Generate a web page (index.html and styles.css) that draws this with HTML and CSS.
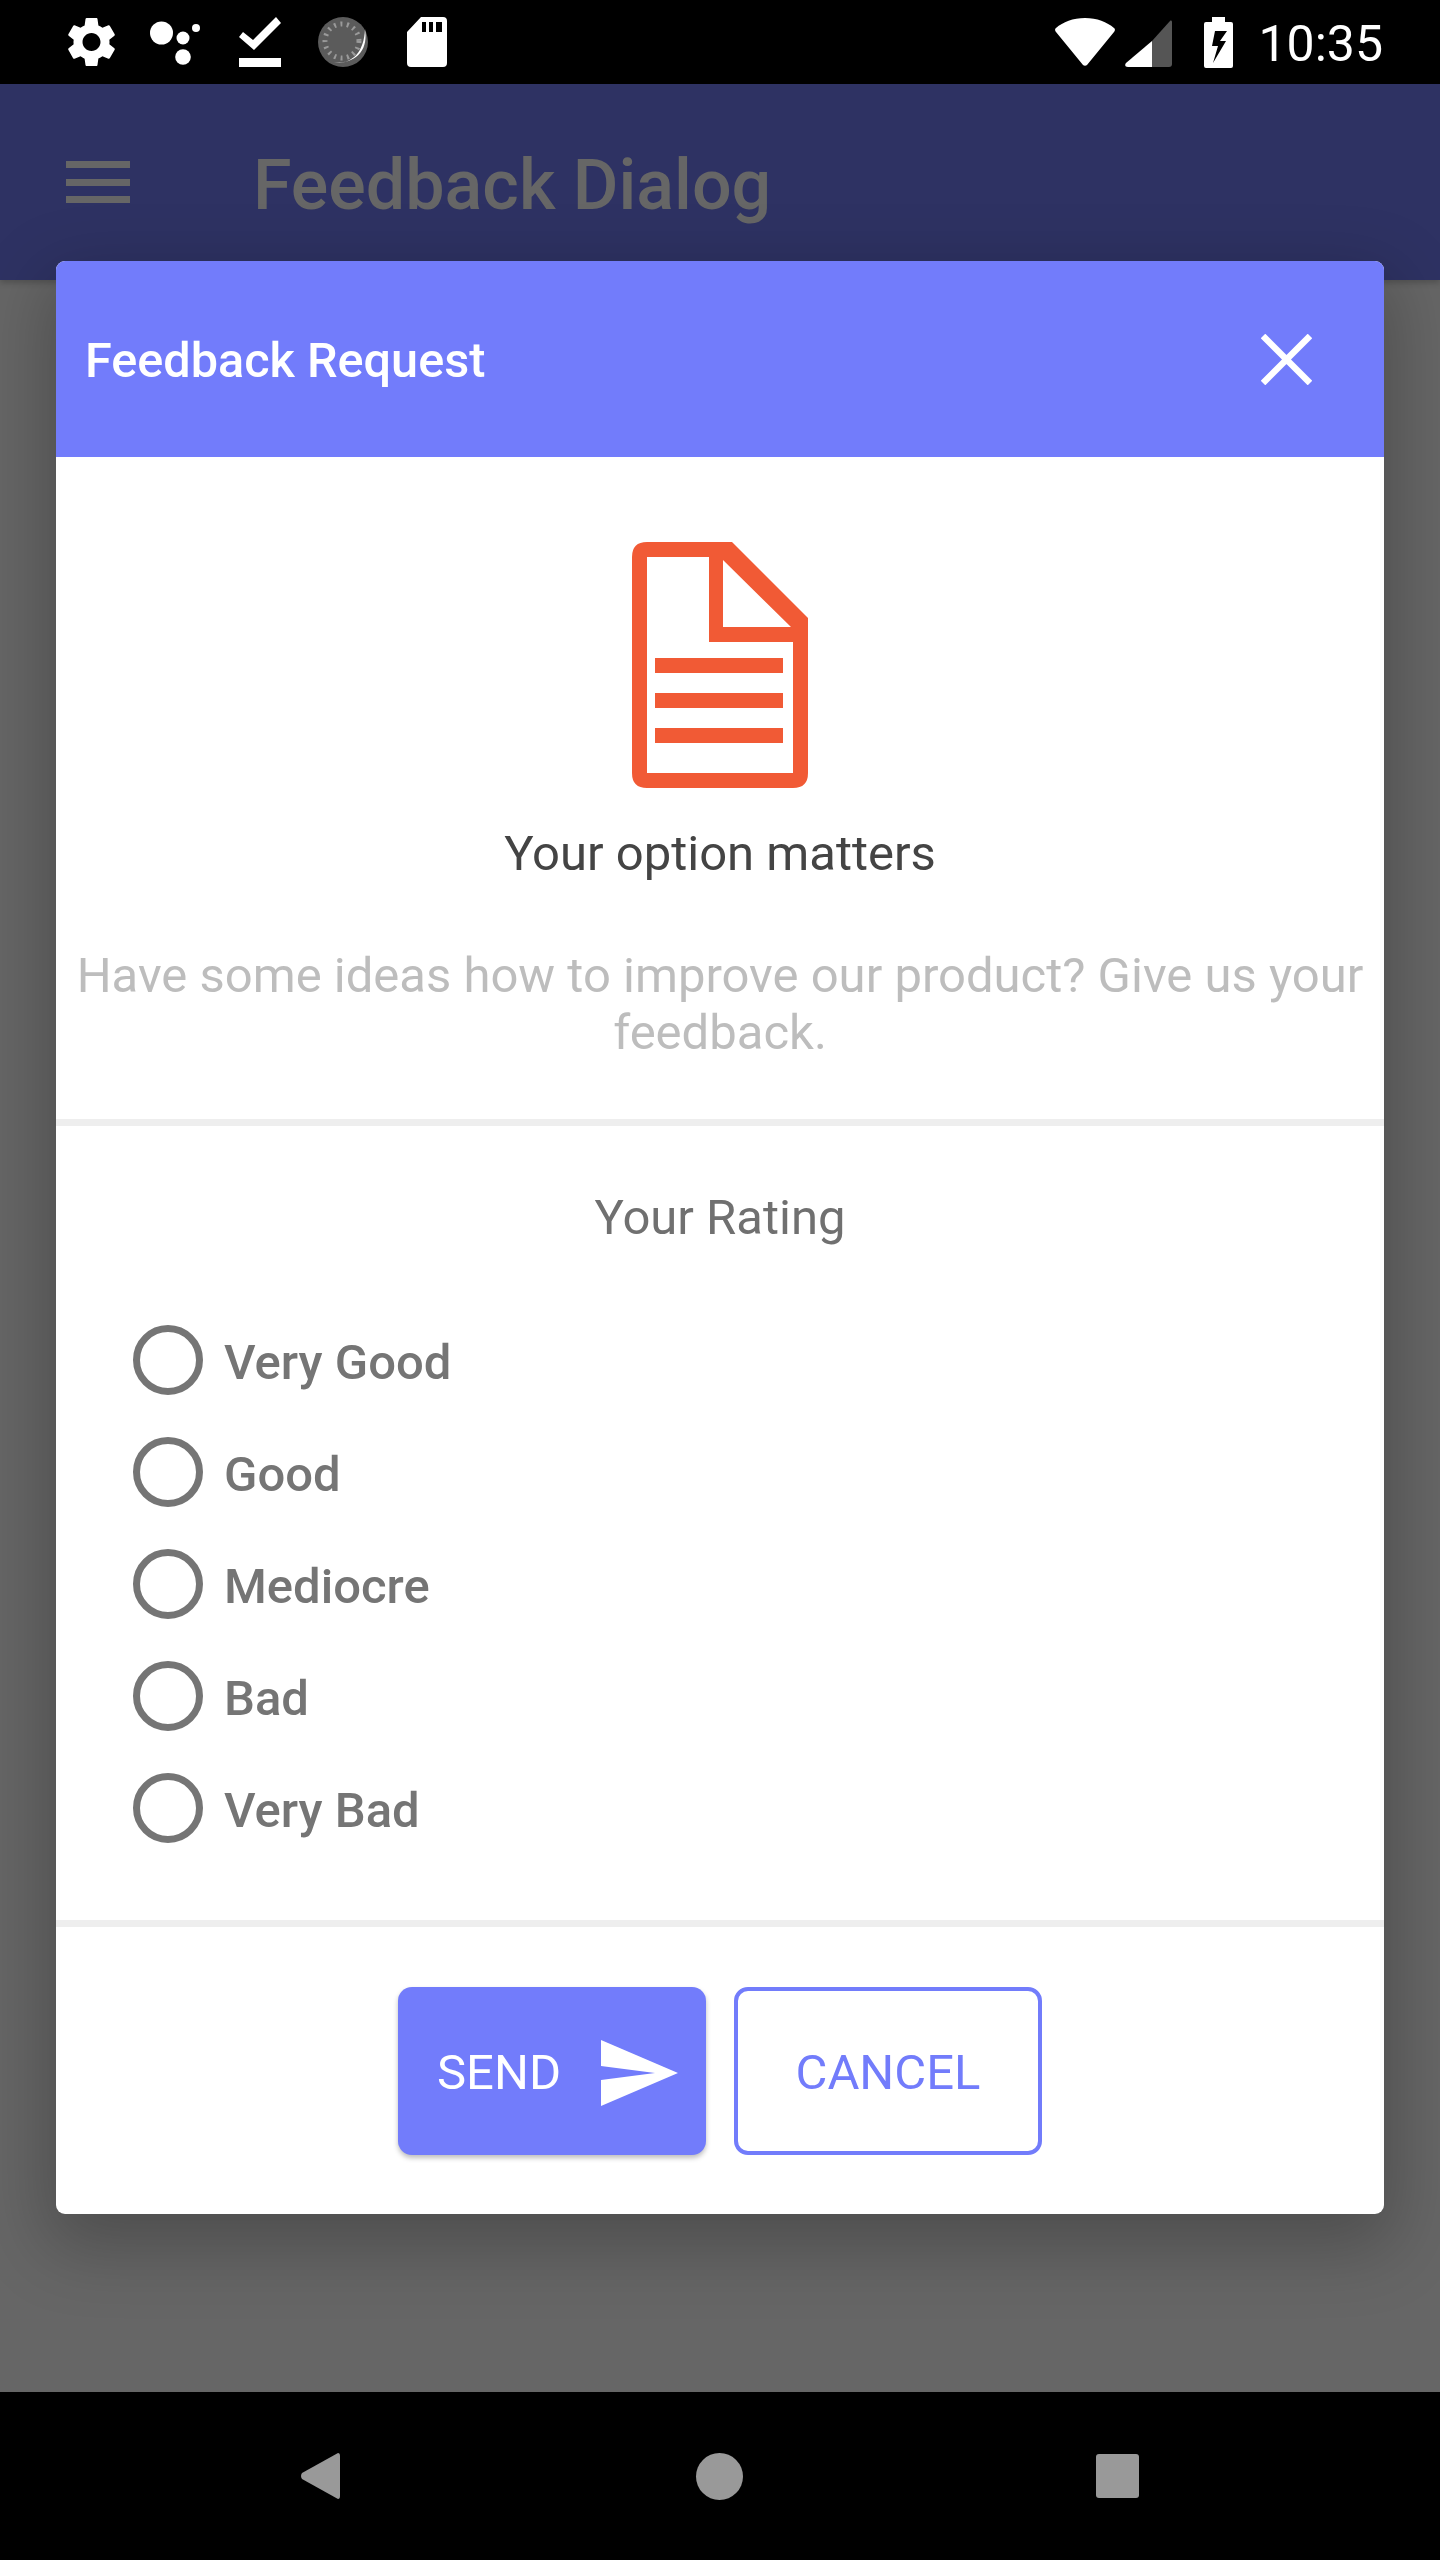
FILE: index.html
```html
<!DOCTYPE html>
<html lang="en">

<head>
    <meta charset="UTF-8">
    <title>Feedback Dialog</title>
    <link rel="stylesheet" href="styles.css">
</head>

<body>
    <div class="screen">
        <div class="status_bar">
            <div class="status_left">
                <svg class="ic_gear" viewBox="2.5 2 19 20"><path fill="#fff" d="M19.14 12.94c.04-.3.06-.61.06-.94 0-.32-.02-.64-.07-.94l2.03-1.58c.18-.14.23-.41.12-.61l-1.92-3.32c-.12-.22-.37-.29-.59-.22l-2.39.96c-.5-.38-1.03-.7-1.62-.94l-.36-2.54c-.04-.24-.24-.41-.48-.41h-3.84c-.24 0-.43.17-.47.41l-.36 2.54c-.59.24-1.13.57-1.62.94l-2.39-.96c-.22-.08-.47 0-.59.22L2.74 8.87c-.12.21-.08.47.12.61l2.03 1.58c-.05.3-.09.63-.09.94s.02.64.07.94l-2.03 1.58c-.18.14-.23.41-.12.61l1.92 3.32c.12.22.37.29.59.22l2.39-.96c.5.38 1.03.7 1.62.94l.36 2.54c.05.24.24.41.48.41h3.84c.24 0 .44-.17.47-.41l.36-2.54c.59-.24 1.13-.56 1.62-.94l2.39.96c.22.08.47 0 .59-.22l1.92-3.32c.12-.22.07-.47-.12-.61l-2.01-1.58zM12 15.6c-1.98 0-3.6-1.62-3.6-3.6s1.62-3.6 3.6-3.6 3.6 1.62 3.6 3.6-1.62 3.6-3.6 3.6z"/></svg>
                <svg class="ic_dots" viewBox="0 0 50 50"><circle cx="11.500" cy="16" r="11.500" fill="#fff"/><circle cx="33" cy="21" r="6.500" fill="#fff"/><circle cx="46" cy="11" r="4" fill="#fff"/><circle cx="33" cy="40" r="7.800" fill="#fff"/></svg>
                <svg class="ic_check" viewBox="0 0 42 50"><path fill="#fff" d="M37 0L42 6 15 33 0 20 4 15 14 23zM0 41H42V50H0z"/></svg>
                <svg class="ic_spin" viewBox="0 0 50 50">
                    <circle cx="25" cy="25" r="25" fill="#5b5b5b"/>
                    <path fill="#fff" d="M47 12C50 30 42 46 16 46 34 47 46 36 47 12z"/>
                    <circle cx="24" cy="24" r="17" fill="none" stroke="#9a9a9a" stroke-width="5" stroke-dasharray="2 4.500"/>
                </svg>
                <svg class="ic_sd" viewBox="0 0 40 50"><path fill="#fff" fill-rule="evenodd" d="M14 0H36Q40 0 40 4V46Q40 50 36 50H4Q0 50 0 46V15zM15 5V15H19V5zM22 5V15H26V5zM29 5V15H35V5z"/></svg>
            </div>
            <div class="status_right">
                <svg class="ic_wifi" viewBox="0 0 60 48"><path fill="#fff" d="M30 0C42 0 52 4 59 10 60.500 11 60 13 59 14L32 47C31 48 29 48 28 47L1 14C0 13-.5 11 1 10 8 4 18 0 30 0z"/></svg>
                <svg class="ic_signal" viewBox="0 0 47 47"><path fill="#555" d="M27 21L45 1C46 0 47 1 47 2V44Q47 47 44 47H27z"/><path fill="#fff" d="M27 21V47H3C0 47-.5 45 1 43z"/></svg>
                <svg class="ic_battery" viewBox="0 0 29 51"><path fill="#fff" fill-rule="evenodd" d="M8 0H21V5H27Q29 5 29 7V49Q29 51 27 51H2Q0 51 0 49V7Q0 5 2 5H8zM11 14L8 29H14L9 46 22 24H16L23 14z"/></svg>
                <span class="status_time">10:35</span>
            </div>
        </div>

        <div class="app_bar">
            <div class="menu_icon">
                <span></span>
                <span></span>
                <span></span>
            </div>
            <h1 class="app_title">Feedback Dialog</h1>
        </div>

        <div class="main"></div>

        <div class="nav_bar">
            <svg class="ic_back" viewBox="0 0 39 46"><path fill="#999" d="M37 0Q39 0 39 3V43Q39 46 37 46L1 26Q-1 23 1 20z"/></svg>
            <span class="ic_home"></span>
            <span class="ic_square"></span>
        </div>

        <div class="dialog">
            <div class="dialog_head">
                <span class="dialog_title">Feedback Request</span>
                <svg class="ic_close" viewBox="0 0 51 51"><path stroke="#fff" stroke-width="6.500" d="M2 2L49 49M49 2L2 49"/></svg>
            </div>

            <div class="intro">
                <svg class="ic_file" viewBox="0 0 176 246">
                    <path fill="#f15a35" fill-rule="evenodd" d="M15 0H100L176 76V231Q176 246 161 246H15Q0 246 0 231V15Q0 0 15 0zM15 15V231H161V100H77V15zM91 18V85H159z"/>
                    <path fill="#f15a35" d="M23 116H151V131H23zM23 151H151V166H23zM23 186H151V201H23z"/>
                </svg>
                <h2 class="intro_title">Your option matters</h2>
                <p class="intro_text">Have some ideas how to improve our product? Give us your feedback.</p>
            </div>

            <div class="rating">
                <h3 class="rating_title">Your Rating</h3>
                <ul class="rating_list">
                    <li><span class="radio"></span><span class="radio_label">Very Good</span></li>
                    <li><span class="radio"></span><span class="radio_label">Good</span></li>
                    <li><span class="radio"></span><span class="radio_label">Mediocre</span></li>
                    <li><span class="radio"></span><span class="radio_label">Bad</span></li>
                    <li><span class="radio"></span><span class="radio_label">Very Bad</span></li>
                </ul>
            </div>

            <div class="actions">
                <button class="btn btn_send">SEND
                    <svg class="ic_send" viewBox="0 0 77 66"><path fill="#fff" d="M0 0L77 33 0 66V40L54 33 0 26z"/></svg>
                </button>
                <button class="btn btn_cancel">CANCEL</button>
            </div>
        </div>
    </div>
</body>

</html>
```

FILE: styles.css
```css
* {
    margin: 0;
    padding: 0;
    box-sizing: border-box;
    list-style: none;
}

body {
    background-color: #000;
    font-family: Roboto, "Liberation Sans", sans-serif;
}

svg {
    display: block;
    flex: none;
}

.screen {
    width: 1440px;
    height: 2560px;
    display: flex;
    flex-direction: column;
    position: relative;
    overflow: hidden;
}

/* status bar */
.status_bar {
    height: 84px;
    flex: none;
    background-color: #000;
    display: flex;
    justify-content: space-between;
    align-items: center;
    padding: 0 57px 0 67px;
}

.status_left {
    display: flex;
    align-items: center;
}

.status_right {
    display: flex;
    align-items: center;
}

.ic_gear {
    width: 49px;
    height: 50px;
}

.ic_dots {
    width: 50px;
    height: 50px;
    margin-left: 34px;
}

.ic_check {
    width: 42px;
    height: 50px;
    margin-left: 39px;
}

.ic_spin {
    width: 50px;
    height: 50px;
    margin-left: 37px;
}

.ic_sd {
    width: 40px;
    height: 50px;
    margin-left: 39px;
}

.ic_wifi {
    width: 60px;
    height: 48px;
}

.ic_signal {
    width: 47px;
    height: 47px;
    margin-left: 10px;
    margin-top: 3px;
}

.ic_battery {
    width: 29px;
    height: 51px;
    margin-left: 32px;
}

.status_time {
    margin-left: 25px;
    padding-top: 3px;
    color: #fff;
    font-size: 50px;
    line-height: 56px;
}

/* app bar */
.app_bar {
    height: 196px;
    flex: none;
    background-color: #2e3263;
    display: flex;
    align-items: center;
    padding-left: 66px;
    position: relative;
    box-shadow: 0 3px 6px rgba(0, 0, 0, .2);
}

.menu_icon {
    width: 64px;
    height: 42px;
    display: flex;
    flex-direction: column;
    justify-content: space-between;
}

.menu_icon span {
    height: 7px;
    background-color: #666;
}

.app_title {
    margin-left: 123px;
    padding-top: 6px;
    color: #666;
    font-size: 70px;
    font-weight: 500;
}

.main {
    flex: 1;
    background-color: #666;
}

/* nav bar */
.nav_bar {
    height: 168px;
    flex: none;
    background-color: #000;
    position: relative;
    display: flex;
    align-items: center;
    padding-left: 301px;
}

.ic_back {
    width: 39px;
    height: 46px;
}

.ic_home {
    width: 47px;
    height: 47px;
    margin-left: 356px;
    border-radius: 50%;
    background-color: #999;
}

.ic_square {
    width: 43px;
    height: 44px;
    margin-left: 353px;
    border-radius: 3px;
    background-color: #999;
}

/* dialog */
.dialog {
    width: 1328px;
    position: absolute;
    left: 56px;
    top: 261px;
    background-color: #fff;
    border-radius: 9px;
    box-shadow: 0 24px 70px 10px rgba(0, 0, 0, .24);
}

.dialog_head {
    height: 196px;
    background-color: #727cfb;
    border-radius: 9px 9px 0 0;
    display: flex;
    justify-content: space-between;
    align-items: center;
    padding: 0 72px 0 29px;
}

.dialog_title {
    padding-top: 2px;
    color: #fff;
    font-size: 48.600px;
    font-weight: 500;
}

.ic_close {
    width: 51px;
    height: 51px;
}

.intro {
    padding: 85px 0 58px;
    display: flex;
    flex-direction: column;
    align-items: center;
    border-bottom: 7px solid #eee;
}

.ic_file {
    width: 176px;
    height: 246px;
}

.intro_title {
    margin-top: 36px;
    color: #444;
    font-size: 49px;
    font-weight: 400;
    line-height: 60px;
}

.intro_text {
    margin-top: 63px;
    width: 1310px;
    color: #bdbdbd;
    font-size: 49px;
    line-height: 57px;
    text-align: center;
}

.rating {
    padding: 62px 0 56px;
    border-bottom: 7px solid #eee;
}

.rating_title {
    color: #707070;
    font-size: 49px;
    font-weight: 400;
    line-height: 60px;
    text-align: center;
}

.rating_list {
    margin-top: 56px;
    padding-left: 77px;
}

.rating_list li {
    height: 112px;
    display: flex;
    align-items: center;
    color: #757575;
    font-size: 49px;
    font-weight: 500;
}

.radio {
    width: 70px;
    height: 70px;
    margin-right: 21px;
    border: 7.500px solid #757575;
    border-radius: 50%;
}

.radio_label {
    padding-top: 4px;
}

.actions {
    padding: 60px 0 59px;
    display: flex;
    justify-content: center;
    gap: 28px;
}

.btn {
    width: 308px;
    height: 168px;
    padding-top: 3px;
    border-radius: 14px;
    font-family: Roboto, "Liberation Sans", sans-serif;
    font-size: 49px;
}

.btn_send {
    border: none;
    background-color: #727cfb;
    color: #fff;
    display: flex;
    align-items: center;
    padding-left: 39px;
    box-shadow: 0 3px 5px rgba(0, 0, 0, .26);
}

.ic_send {
    width: 77px;
    height: 66px;
    margin-left: auto;
    margin-right: 28px;
}

.btn_cancel {
    border: 4px solid #727cfb;
    background-color: #fff;
    color: #727cfb;
}
```
